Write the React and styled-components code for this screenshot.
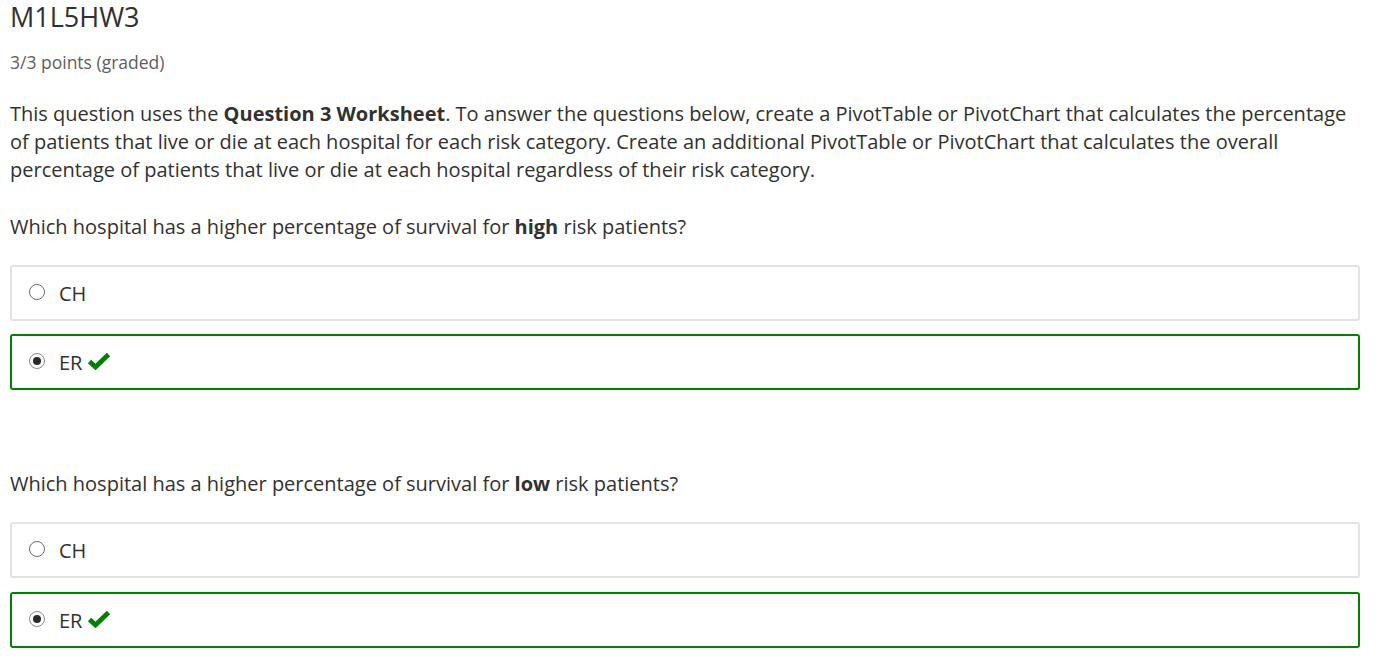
import React from 'react'
import styled, { createGlobalStyle } from 'styled-components'

const GlobalStyle = createGlobalStyle`
    body {
        margin: 0;
        background: #fff;
        font-family: "Open Sans", "Noto Sans", sans-serif;
        color: #313131;
    }
`

const Page = styled.div`
    padding: 0 22px 0 10px;
`

const Title = styled.h2`
    margin: 0;
    padding-top: 1px;
    font-size: 27px;
    font-weight: 400;
    line-height: 31px;
    color: #313131;
`

const Points = styled.div`
    margin-top: 18px;
    font-size: 17.5px;
    line-height: 24px;
    color: #5e5e5e;
`

const Paragraph = styled.p`
    margin: ${(p) => p.top}px 0 0;
    font-size: 20px;
    line-height: 28px;
`

const Choices = styled.div`
    display: flex;
    flex-direction: column;
    gap: ${(p) => p.gap}px;
    margin-top: 24px;
`

const Choice = styled.label`
    display: flex;
    align-items: center;
    height: 56px;
    box-sizing: border-box;
    padding: 0 14px 0 17px;
    border: 2px solid ${(p) => (p.correct ? '#008100' : '#e3e3e3')};
    border-radius: 3px;
    font-size: 20px;
    color: #313131;
`

const Radio = styled.span`
    width: 16px;
    height: 16px;
    box-sizing: border-box;
    border-radius: 50%;
    border: 1.5px solid ${(p) => (p.checked ? '#8a8a8a' : '#6b6b6b')};
    margin-right: 14px;
    margin-top: -2px;
    display: flex;
    align-items: center;
    justify-content: center;
    flex-shrink: 0;
    &::after {
        content: '';
        display: ${(p) => (p.checked ? 'block' : 'none')};
        width: 8px;
        height: 8px;
        border-radius: 50%;
        background: #2b2b2b;
    }
`

const Check = () => (
    <svg width="24" height="18" viewBox="0 0 24 18" style={{ marginLeft: 5, marginTop: -3 }}>
        <path d="M2.5 9.5 L8.5 15 L21.5 2.5" fill="none" stroke="#008100" strokeWidth="4.8" />
    </svg>
)

const Question = ({ word, top, gap }) => (
    <>
        <Paragraph top={top}>
            Which hospital has a higher percentage of survival for <b>{word}</b> risk patients?
        </Paragraph>
        <Choices gap={gap}>
            <Choice>
                <Radio />
                CH
            </Choice>
            <Choice correct>
                <Radio checked />
                ER
                <Check />
            </Choice>
        </Choices>
    </>
)

const App = () => {
    return (
        <Page>
            <GlobalStyle />
            <Title>M1L5HW3</Title>
            <Points>3/3 points (graded)</Points>
            <Paragraph top={26}>
                This question uses the <b>Question 3 Worksheet</b>. To answer the questions below, create a PivotTable
                or PivotChart that calculates the percentage of patients that live or die at each hospital for each risk
                category. Create an additional PivotTable or PivotChart that calculates the overall percentage of
                patients that live or die at each hospital regardless of their risk category.
            </Paragraph>
            <Question word="high" top={29} gap={13} />
            <Question word="low" top={80} gap={14} />
        </Page>
    )
}

export default App
